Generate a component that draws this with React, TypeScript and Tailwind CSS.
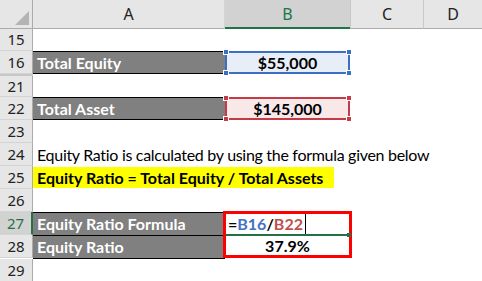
import React from 'react'

const cols = 'grid grid-cols-[33px_192px_125px_74px_58px]'
const font = "font-['Lato','Open_Sans',sans-serif]"

function RowHead({ n, active, h = 'h-[23px]' }: { n: string; active?: boolean; h?: string }) {
  return (
    <div
      className={`${h} flex items-center justify-center border-b border-[#d4d4d4] text-[15px] font-['Noto_Sans',sans-serif] ${
        active ? 'bg-[#d2d2d2] text-[#217346] border-r-2 border-r-[#217346]' : 'bg-[#e6e6e6] text-[#222] border-r border-r-[#ababab]'
      }`}
    >
      {n}
    </div>
  )
}

function Handle({ className, color }: { className: string; color: string }) {
  return <span className={`absolute w-[6px] h-[6px] border border-white ${color} ${className}`} />
}

export default function App() {
  return (
    <div className={`w-[482px] h-[281px] overflow-hidden bg-white ${font}`}>
      {/* column headers */}
      <div className={`${cols} h-[29px] text-[16px] font-['Noto_Sans',sans-serif]`}>
        <div className="relative bg-[#e6e6e6] border-r border-b border-[#ababab]">
          <svg className="absolute right-[3px] bottom-[3px]" width="14" height="14">
            <polygon points="14,0 14,14 0,14" fill="#b4b4b4" />
          </svg>
        </div>
        <div className="flex items-center justify-center bg-[#e6e6e6] border-r border-[#d4d4d4] border-b border-b-[#ababab] text-[#222]">A</div>
        <div className="flex items-center justify-center bg-[#d2d2d2] border-b-2 border-[#217346] text-[#217346]">B</div>
        <div className="flex items-center justify-center bg-[#e6e6e6] border-l border-r border-[#c8c8c8] border-b border-b-[#ababab] text-[#222]">C</div>
        <div className="flex items-center justify-center bg-[#e6e6e6] border-b border-[#ababab] text-[#222]">D</div>
      </div>

      {/* row 15 */}
      <div className={`${cols}`}>
        <RowHead n="15" h="h-[22px]" />
        <div className="col-span-4" />
      </div>

      {/* row 16 */}
      <div className={`${cols}`}>
        <RowHead n="16" />
        <div className="h-[23px] bg-[#808080] border-y border-black text-white font-bold text-[16px] pl-[4px] leading-[21px]">Total Equity</div>
        <div className="relative h-[23px] bg-[#e8eef8] border-2 border-[#3a6fc4] flex items-center justify-center font-bold text-[16px] text-black">
          $55,000
          <Handle color="bg-[#3a6fc4]" className="-left-[4px] -top-[4px]" />
          <Handle color="bg-[#3a6fc4]" className="-left-[4px] -bottom-[4px]" />
          <Handle color="bg-[#3a6fc4]" className="-right-[4px] -top-[4px]" />
          <Handle color="bg-[#3a6fc4]" className="-right-[4px] -bottom-[4px]" />
        </div>
        <div className="col-span-2" />
      </div>

      {/* row 21 */}
      <div className={`${cols}`}>
        <div className="h-[23px] border-t-2 border-[#c8c8c8]">
          <RowHead n="21" h="h-[21px]" />
        </div>
        <div className="col-span-4" />
      </div>

      {/* row 22 */}
      <div className={`${cols}`}>
        <RowHead n="22" />
        <div className="h-[23px] bg-[#808080] border-y border-black text-white font-bold text-[16px] pl-[4px] leading-[21px]">Total Asset</div>
        <div className="relative h-[23px] bg-[#f8e8e8] border-2 border-[#c23b47] flex items-center justify-center font-bold text-[16px] text-black">
          $145,000
          <Handle color="bg-[#c23b47]" className="-left-[4px] -top-[4px]" />
          <Handle color="bg-[#c23b47]" className="-left-[4px] -bottom-[4px]" />
          <Handle color="bg-[#c23b47]" className="-right-[4px] -top-[4px]" />
          <Handle color="bg-[#c23b47]" className="-right-[4px] -bottom-[4px]" />
        </div>
        <div className="col-span-2" />
      </div>

      {/* row 23 */}
      <div className={`${cols}`}>
        <RowHead n="23" />
        <div className="col-span-4" />
      </div>

      {/* row 24 */}
      <div className={`${cols}`}>
        <RowHead n="24" />
        <div className="col-span-4 h-[23px] pl-[4px] text-[16px] tracking-[-0.3px] text-black leading-[23px] whitespace-nowrap">
          Equity Ratio is calculated by using the formula given below
        </div>
      </div>

      {/* row 25 */}
      <div className={`${cols}`}>
        <RowHead n="25" />
        <div className="col-span-4 h-[23px] py-[1px]">
          <div className="w-[301px] h-[21px] bg-[#ffff00] pl-[4px] text-[16px] font-bold text-black leading-[21px] whitespace-nowrap">
            Equity Ratio = Total Equity / Total Assets
          </div>
        </div>
      </div>

      {/* row 26 */}
      <div className={`${cols}`}>
        <RowHead n="26" />
        <div className="col-span-4" />
      </div>

      {/* rows 27-28 */}
      <div className={`${cols}`}>
        <div>
          <RowHead n="27" active />
          <RowHead n="28" />
        </div>
        <div className="bg-[#808080] border-y border-black text-white font-bold text-[16px]">
          <div className="h-[23px] pl-[4px] leading-[22px] border-b border-black">Equity Ratio Formula</div>
          <div className="h-[22px] pl-[4px] leading-[22px]">Equity Ratio</div>
        </div>
        <div className="-ml-[2px] -mt-[1px] h-[47px] w-[129px] border-[3px] border-[#ff0000] bg-white text-[16px] font-bold">
          <div className="relative h-[22px] flex items-center pl-[2px] border-b-2 border-[#217346]">
            <span className="text-black">=</span>
            <span className="text-[#4472c4]">B16</span>
            <span className="text-black">/</span>
            <span className="text-[#c0504d]">B22</span>
            <span className="ml-[2px] w-px h-[20px] bg-black" />
            <span className="absolute -right-[2px] -bottom-[3px] w-[4px] h-[4px] bg-[#217346]" />
          </div>
          <div className="h-[19px] flex items-center justify-center text-black">37.9%</div>
        </div>
        <div className="col-span-2" />
      </div>

      {/* row 29 */}
      <div className={`${cols}`}>
        <RowHead n="29" />
        <div className="col-span-4" />
      </div>
    </div>
  )
}
